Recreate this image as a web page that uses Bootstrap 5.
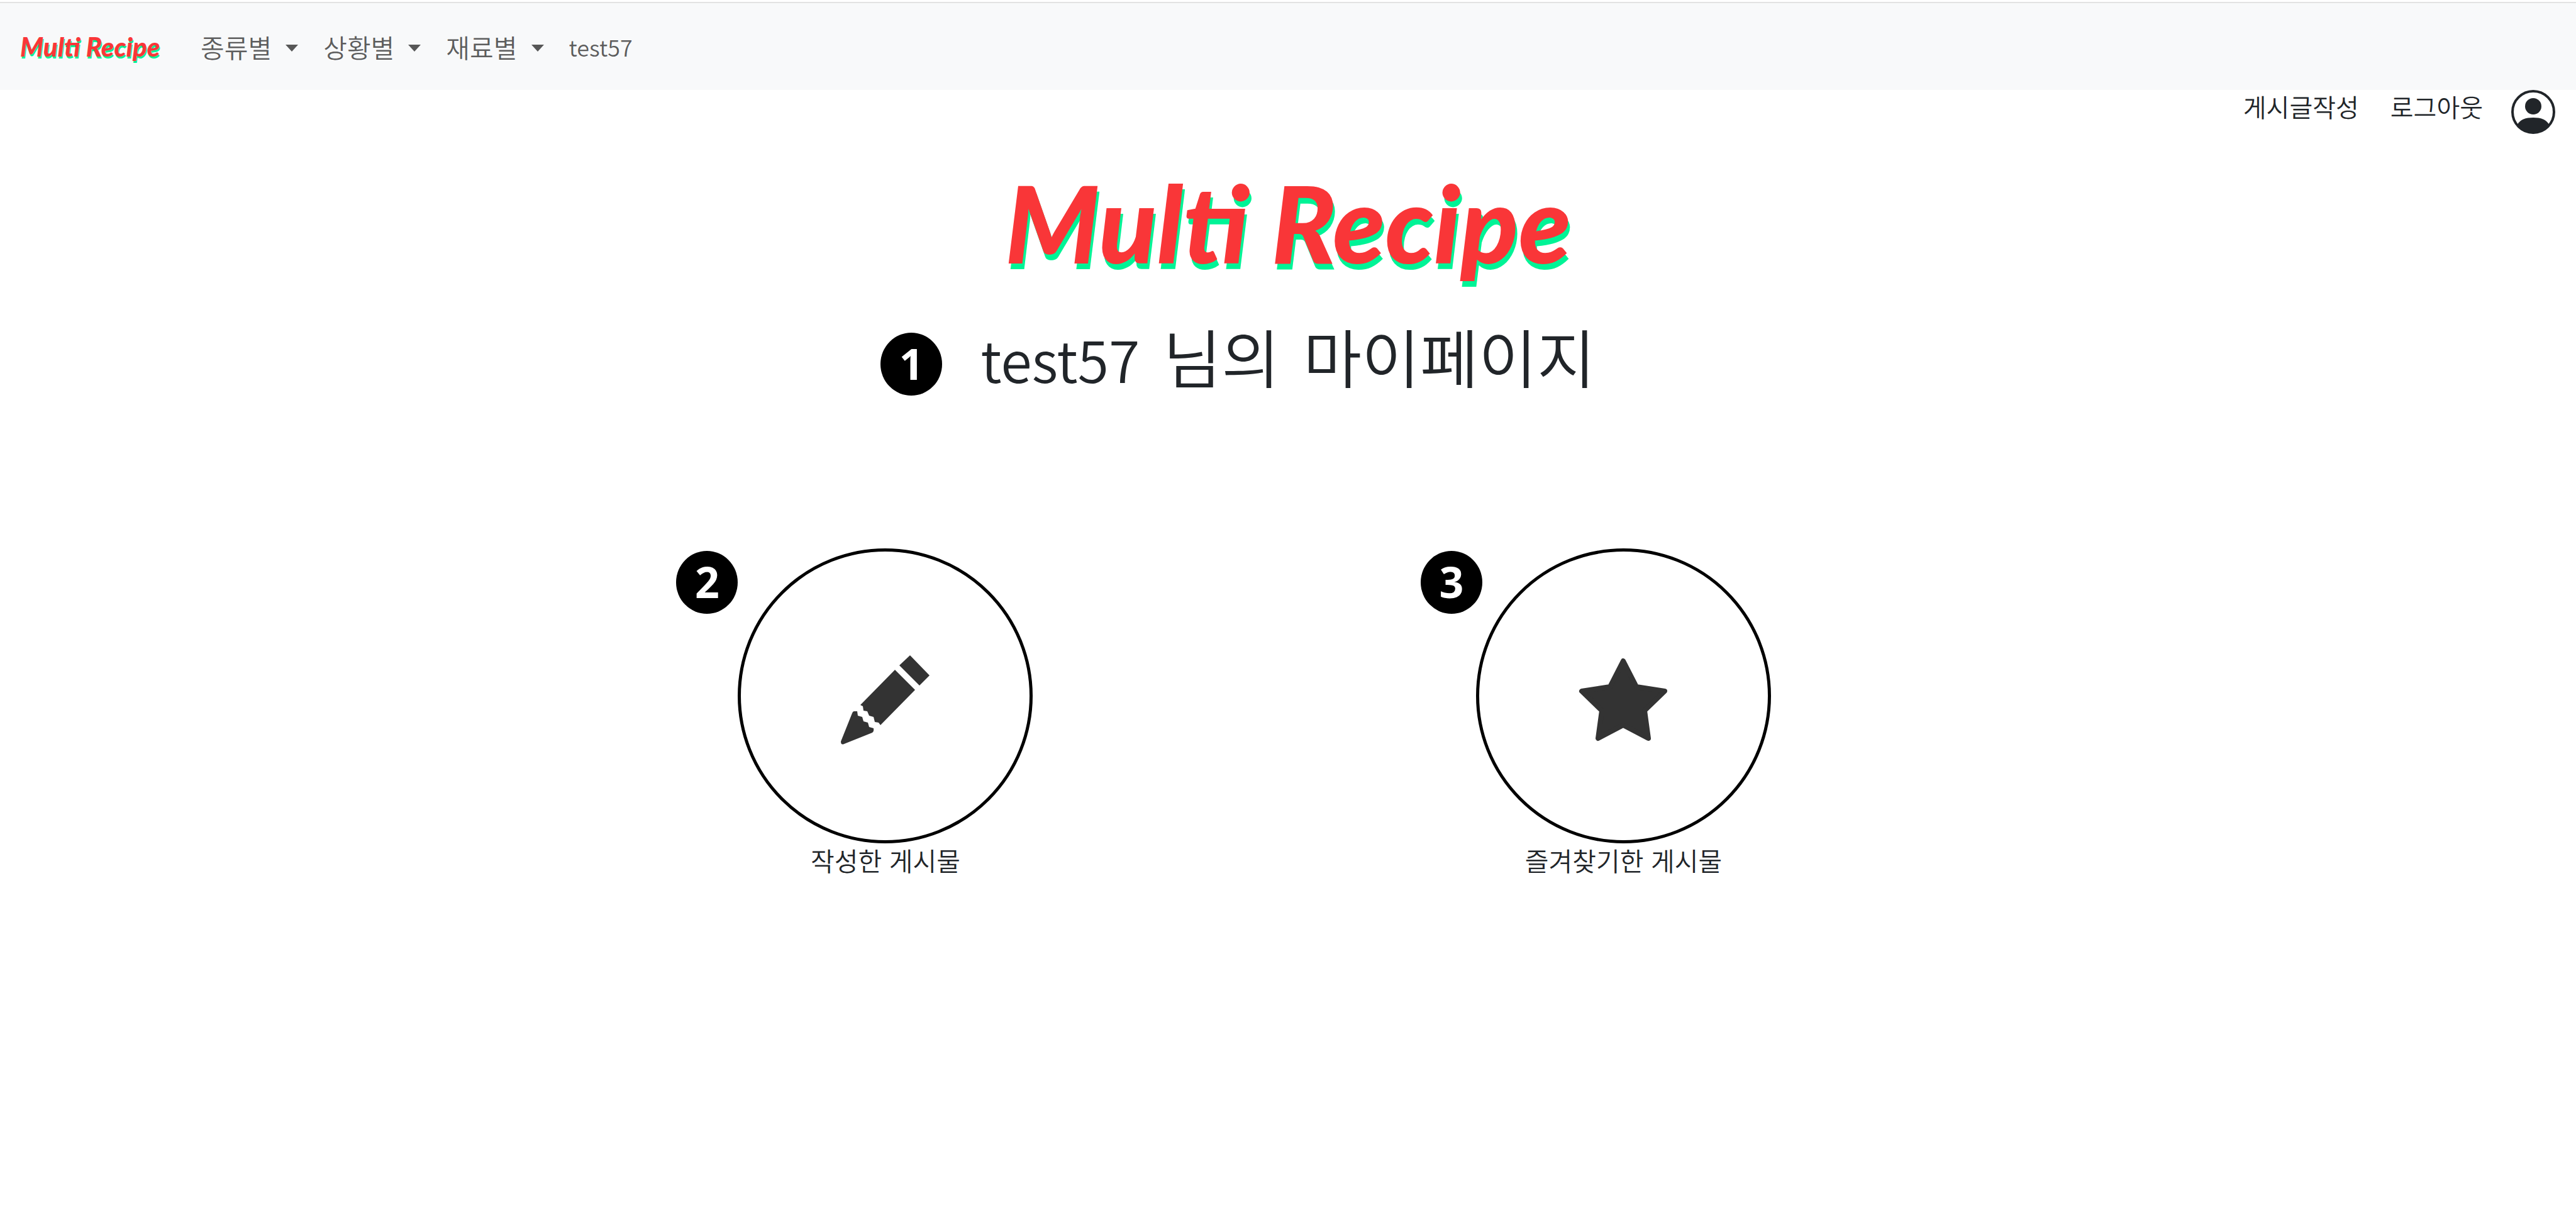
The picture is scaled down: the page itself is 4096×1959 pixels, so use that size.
<!DOCTYPE html>
<html lang="ko">
<head>
<meta charset="utf-8">
<meta name="viewport" content="width=device-width, initial-scale=1">
<title>Multi Recipe</title>
<link href="https://cdn.jsdelivr.net/npm/bootstrap@5.3.0/dist/css/bootstrap.min.css" rel="stylesheet">
<style>
body { font-family: "Noto Sans CJK KR", sans-serif; font-size: 41px; font-weight: 350; line-height: 52px; color: #212529; background: #fff; }
a { color: inherit; text-decoration: none; }
.top-rule { height: 3px; border-bottom: 2px solid #e3e3e3; box-sizing: content-box; }
.main-nav { --bs-navbar-padding-y: 0; --bs-navbar-nav-link-padding-x: 20px; min-height: 138px; background: #f8f9fa; padding: 0 32px; }
.main-nav .nav-link { font-size: 41px; color: rgba(0,0,0,.65); }
.main-nav .nav-link.latin { font-size: 36px; }
.main-nav .dropdown-toggle::after { border-top: 11px solid; border-left: 10px solid transparent; border-right: 10px solid transparent; margin-left: 22px; vertical-align: 10px; }
.main-nav .dropdown-menu { font-size: 41px; }
.wordmark { font-family: Lato, sans-serif; font-weight: 900; font-style: italic; color: #f93638; white-space: nowrap; }
.wordmark-sm { width: 224px; font-size: 42px; line-height: 60px; text-shadow: 1px 3px 0 #00f396; margin-right: 43px; }
.wordmark-lg { font-size: 170px; line-height: 184px; text-shadow: 3px 9px 0 #00f396; margin-top: 48px; }
.user-bar { height: 70px; padding-right: 33px; font-size: 40px; }
.user-bar .write { margin-right: 50px; }
.user-bar .logout { margin-right: 45px; }
.avatar { width: 70px; height: 70px; display: block; }
.page-title { font-size: 101px; font-weight: 350; line-height: 140px; gap: 37px; margin: 50px 0 0; }
.page-title .latin { font-size: 90px; }
.step { position: absolute; top: 0; right: 100%; width: 98px; height: 100px; border-radius: 50%; background: #000; color: #fff; font-family: "Noto Sans", sans-serif; font-size: 68px; font-weight: 700; line-height: 98px; text-align: center; }
.page-title .step { top: 34px; margin-right: 61px; }
.tile .step { top: 4px; }
.tile-favorites .step { margin-right: -10px; }
.tiles { width: 57.3%; margin: 232px 0 0 20.05%; }
.tile-ring { width: 469px; height: 469px; border: 5px solid #000; border-radius: 50%; }
.tile-ring svg { width: 143px; height: 143px; display: block; overflow: visible; }
</style>
</head>
<body>
<div class="top-rule"></div>
<nav class="navbar navbar-expand main-nav">
  <a class="wordmark wordmark-sm" href="#">Multi Recipe</a>
  <ul class="navbar-nav align-items-center">
    <li class="nav-item dropdown"><a class="nav-link dropdown-toggle" href="#" role="button" data-bs-toggle="dropdown" aria-expanded="false">종류별</a></li>
    <li class="nav-item dropdown"><a class="nav-link dropdown-toggle" href="#" role="button" data-bs-toggle="dropdown" aria-expanded="false">상황별</a></li>
    <li class="nav-item dropdown"><a class="nav-link dropdown-toggle" href="#" role="button" data-bs-toggle="dropdown" aria-expanded="false">재료별</a></li>
    <li class="nav-item"><a class="nav-link latin" href="#">test57</a></li>
  </ul>
</nav>
<div class="user-bar d-flex justify-content-end">
  <a class="write" href="#">게시글작성</a>
  <a class="logout" href="#">로그아웃</a>
  <a href="#" aria-label="마이페이지">
    <svg class="avatar" viewBox="0 0 70 70"><circle cx="35" cy="35" r="33" fill="none" stroke="#212529" stroke-width="4"/><circle cx="35" cy="26" r="13" fill="#212529"/><path d="M10 55C14 47 23 44 35 44s21 3 25 11C54 64 46 69 35 69S16 64 10 55z" fill="#212529"/></svg>
  </a>
</div>
<main>
  <div class="text-center"><a class="wordmark wordmark-lg d-inline-block" href="#">Multi Recipe</a></div>
  <div class="d-flex justify-content-center">
    <h1 class="page-title position-relative d-flex align-items-baseline"><span class="step">1</span><span class="latin">test57</span><span>님의</span><span>마이페이지</span></h1>
  </div>
  <div class="tiles d-flex">
    <div class="col-6 d-flex justify-content-center">
      <div class="tile position-relative text-center">
        <span class="step">2</span>
        <a href="#" class="d-block">
          <span class="tile-ring d-flex align-items-center justify-content-center"><svg viewBox="163 163 143 143" fill="#333"><path d="M274 170L305 202L289 218L257 186zM250 193L282 225L227 281L224 277L218 276L216 268L209 266L206 259L200 258L199 251L195 249z"/><path d="M185 259L190 259L191 266L198 268L200 275L207 277L209 284L216 286Q217 291 214 293L169 311Q164 313 164 307L182 262Q183 259 185 259z"/></svg></span>
          <span class="d-block">작성한 게시물</span>
        </a>
      </div>
    </div>
    <div class="col-6 d-flex justify-content-center">
      <div class="tile tile-favorites position-relative text-center">
        <span class="step">3</span>
        <a href="#" class="d-block">
          <span class="tile-ring d-flex align-items-center justify-content-center"><svg viewBox="163 163 143 143" fill="#333" stroke="#333" stroke-width="8" stroke-linejoin="round"><path d="M234 179L255 220L300 227L268 258L274 302L234 281L194 302L200 258L168 227L213 220z"/></svg></span>
          <span class="d-block">즐겨찾기한 게시물</span>
        </a>
      </div>
    </div>
  </div>
</main>
<script src="https://cdn.jsdelivr.net/npm/bootstrap@5.3.0/dist/js/bootstrap.bundle.min.js"></script>
</body>
</html>
